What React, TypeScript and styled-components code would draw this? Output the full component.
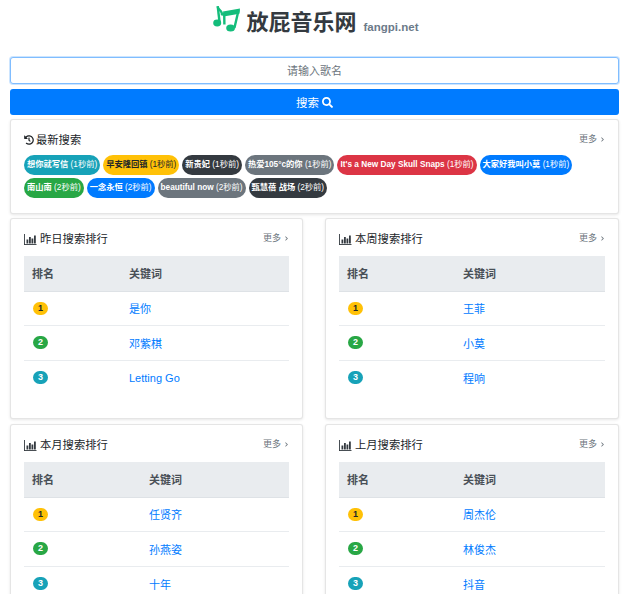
import React from 'react';
import styled, { createGlobalStyle } from 'styled-components';
import { FaChevronRight, FaSearch, FaHistory } from 'react-icons/fa';

const GlobalStyle = createGlobalStyle`
    html, body {
        margin: 0;
        height: 594px;
        overflow: hidden;
        background: #fff;
    }
    body {
        font-family: 'Liberation Sans', 'Noto Sans CJK SC', sans-serif;
        color: #212529;
        font-size: 11px;
    }
    * {
        box-sizing: border-box;
    }
`;

const Page = styled.div`
    height: 594px;
    overflow: hidden;
    padding: 0 11px 0 10px;
`;

const Brand = styled.div`
    display: flex;
    align-items: center;
    justify-content: center;
    height: 57px;
    padding-bottom: 12px;
    margin-left: 2px;
`;

const Logo = styled.svg`
    width: 28px;
    height: 28px;
    margin-top: -10px;
    fill: #14bd7b;
    stroke: #14bd7b;
`;

const BrandName = styled.span`
    font-size: 22px;
    line-height: 30px;
    font-weight: 700;
    color: #343a40;
    margin-left: 6px;
`;

const BrandSite = styled.span`
    font-size: 11.5px;
    font-weight: 700;
    color: #6c7a89;
    margin: 9px 0 0 7px;
`;

const SearchInput = styled.input`
    display: block;
    width: 100%;
    height: 27px;
    border: 1px solid #80bdff;
    border-radius: 3px;
    box-shadow: 0 0 0 1px rgba(0, 123, 255, 0.2);
    text-align: center;
    font-family: inherit;
    font-size: 11px;
    outline: none;
    &::placeholder {
        color: #6c757d;
    }
`;

const SearchButton = styled.button`
    display: flex;
    align-items: center;
    justify-content: center;
    gap: 3px;
    width: 100%;
    height: 26px;
    margin-top: 5px;
    border: none;
    border-radius: 3px;
    background: #007bff;
    color: #fff;
    font-family: inherit;
    font-size: 11.5px;
`;

const Card = styled.section<{ $height: number }>`
    height: ${(p) => p.$height}px;
    padding: 12px 13px;
    background: #fff;
    border: 1px solid rgba(0, 0, 0, 0.1);
    border-radius: 3px;
    box-shadow: 0 1px 3px rgba(0, 0, 0, 0.1);
`;

const RecentCard = styled(Card)`
    margin-top: 4px;
`;

const CardHeader = styled.div`
    display: flex;
    justify-content: space-between;
    align-items: flex-start;
    height: 25px;
`;

const CardTitle = styled.div`
    display: flex;
    align-items: center;
    gap: 2px;
    font-size: 11.3px;
    line-height: 16px;
    color: #212529;
    svg {
        font-size: 10px;
    }
`;

const ChartIcon = styled.svg`
    width: 14px;
    height: 11px;
    fill: #343a40;
`;

const MoreLink = styled.a`
    display: flex;
    align-items: center;
    gap: 3px;
    font-size: 9px;
    line-height: 14px;
    color: #6c757d;
    svg {
        font-size: 5px;
    }
`;

const Tags = styled.div`
    display: flex;
    flex-wrap: wrap;
    gap: 3px;
    margin-top: -2px;
`;

const tagColors: Record<string, [string, string]> = {
    info: ['#17a2b8', '#fff'],
    warning: ['#ffc107', '#212529'],
    dark: ['#343a40', '#fff'],
    secondary: ['#6c757d', '#fff'],
    danger: ['#dc3545', '#fff'],
    primary: ['#007bff', '#fff'],
    success: ['#28a745', '#fff'],
};

const Tag = styled.span<{ $kind: string }>`
    height: 20px;
    padding: 0 3px;
    border-radius: 10px;
    font-size: 8.25px;
    line-height: 20px;
    white-space: nowrap;
    background: ${(p) => tagColors[p.$kind][0]};
    color: ${(p) => tagColors[p.$kind][1]};
    b {
        font-weight: 700;
    }
`;

const Grid = styled.div`
    display: grid;
    grid-template-columns: 293px 294px;
    justify-content: space-between;
    row-gap: 5px;
    margin-top: 4px;
`;

const RankTable = styled.table`
    width: 100%;
    border-collapse: collapse;
    table-layout: fixed;
    font-size: 11px;
`;

const HeadCell = styled.th<{ $width?: number }>`
    width: ${(p) => (p.$width ? `${p.$width}px` : 'auto')};
    height: 35px;
    padding: 0 8px;
    text-align: left;
    font-weight: 700;
    color: #495057;
    background: #e9ecef;
    border-bottom: 1px solid #dee2e6;
`;

const Cell = styled.td`
    height: 34.5px;
    padding: 0 8px;
    border-bottom: 1px solid #e9ecef;
    tr:last-child & {
        border-bottom: none;
    }
`;

const Rank = styled.span<{ $kind: string }>`
    display: block;
    width: 15px;
    height: 13px;
    margin-left: 1px;
    border-radius: 7px;
    font-size: 9px;
    line-height: 13px;
    font-weight: 700;
    text-align: center;
    background: ${(p) => tagColors[p.$kind][0]};
    color: ${(p) => tagColors[p.$kind][1]};
`;

const SongLink = styled.a`
    color: #007bff;
`;

const MusicLogo = () => (
    <Logo viewBox="0 0 28 28">
        <ellipse cx="4.2" cy="19" rx="4" ry="3.4" stroke="none" />
        <path d="M4.7 2.2 6.6 18.5" strokeWidth="2.4" fill="none" />
        <path d="M4.7 2.6C5 6.4 10 6.5 8.9 11.4" strokeWidth="2.2" fill="none" />
        <path d="M10 7.6 27 4.4 26.4 9.8 10.6 12.6z" stroke="none" />
        <path d="M11.2 9 11.4 20.5M25.6 6 21.4 24" strokeWidth="2.4" fill="none" />
        <ellipse cx="17.6" cy="24" rx="4.4" ry="3.5" stroke="none" />
    </Logo>
);

const BarChart = () => (
    <ChartIcon viewBox="0 0 14 11">
        <rect x="0" y="0" width="0.9" height="11" />
        <rect x="0" y="10" width="12.5" height="0.9" />
        <rect x="2.5" y="5.5" width="1.8" height="4" />
        <rect x="5" y="3" width="1.8" height="6.5" />
        <rect x="7.5" y="4.5" width="1.8" height="5" />
        <rect x="10" y="1.5" width="1.8" height="8" />
    </ChartIcon>
);

interface RecentItem {
    name: string;
    ago: string;
    kind: string;
}

const recent: RecentItem[] = [
    { name: '想你就写信', ago: '(1秒前)', kind: 'info' },
    { name: '早安隆回镇', ago: '(1秒前)', kind: 'warning' },
    { name: '新贵妃', ago: '(1秒前)', kind: 'dark' },
    { name: '热爱105°c的你', ago: '(1秒前)', kind: 'secondary' },
    { name: "It's a New Day Skull Snaps", ago: '(1秒前)', kind: 'danger' },
    { name: '大家好我叫小莫', ago: '(1秒前)', kind: 'primary' },
    { name: '南山南', ago: '(2秒前)', kind: 'success' },
    { name: '一念永恒', ago: '(2秒前)', kind: 'primary' },
    { name: 'beautiful now', ago: '(2秒前)', kind: 'secondary' },
    { name: '甄慧蓓 战场', ago: '(2秒前)', kind: 'dark' },
];

interface Ranking {
    title: string;
    rankWidth: number;
    songs: string[];
}

const rankings: Ranking[] = [
    { title: '昨日搜索排行', rankWidth: 97, songs: ['是你', '邓紫棋', 'Letting Go'] },
    { title: '本周搜索排行', rankWidth: 116, songs: ['王菲', '小莫', '程响'] },
    { title: '本月搜索排行', rankWidth: 117, songs: ['任贤齐', '孙燕姿', '十年'] },
    { title: '上月搜索排行', rankWidth: 116, songs: ['周杰伦', '林俊杰', '抖音'] },
];

const rankKinds = ['warning', 'success', 'info'];

const More = () => (
    <MoreLink>
        更多 <FaChevronRight />
    </MoreLink>
);

export default function App() {
    return (
        <Page>
            <GlobalStyle />
            <Brand>
                <MusicLogo />
                <BrandName>放屁音乐网</BrandName>
                <BrandSite>fangpi.net</BrandSite>
            </Brand>
            <SearchInput placeholder="请输入歌名" />
            <SearchButton>
                搜索 <FaSearch size={11} />
            </SearchButton>
            <RecentCard $height={95}>
                <CardHeader>
                    <CardTitle>
                        <FaHistory /> 最新搜索
                    </CardTitle>
                    <More />
                </CardHeader>
                <Tags>
                    {recent.map((item) => (
                        <Tag key={item.name} $kind={item.kind}>
                            <b>{item.name}</b> {item.ago}
                        </Tag>
                    ))}
                </Tags>
            </RecentCard>
            <Grid>
                {rankings.map((ranking) => (
                    <Card key={ranking.title} $height={201}>
                        <CardHeader>
                            <CardTitle>
                                <BarChart /> {ranking.title}
                            </CardTitle>
                            <More />
                        </CardHeader>
                        <RankTable>
                            <thead>
                                <tr>
                                    <HeadCell $width={ranking.rankWidth}>排名</HeadCell>
                                    <HeadCell>关键词</HeadCell>
                                </tr>
                            </thead>
                            <tbody>
                                {ranking.songs.map((song, i) => (
                                    <tr key={song}>
                                        <Cell>
                                            <Rank $kind={rankKinds[i]}>{i + 1}</Rank>
                                        </Cell>
                                        <Cell>
                                            <SongLink>{song}</SongLink>
                                        </Cell>
                                    </tr>
                                ))}
                            </tbody>
                        </RankTable>
                    </Card>
                ))}
            </Grid>
        </Page>
    );
}
